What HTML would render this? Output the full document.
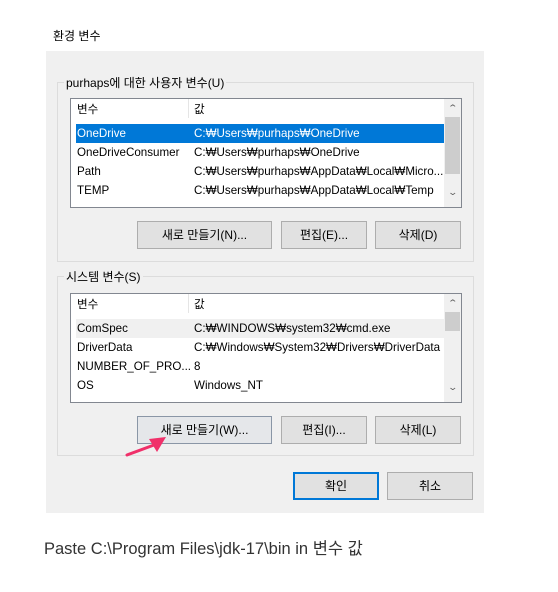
<!DOCTYPE html>
<html><head><meta charset="utf-8"><style>
body{margin:0;width:558px;height:592px;background:#fff;position:relative;font-family:"Liberation Sans","Noto Sans CJK KR",sans-serif;font-size:12px;color:#000;overflow:hidden}
.a{position:absolute}
.panel{left:46px;top:51px;width:438px;height:462px;background:#f0f0f0}
.grp{border:1px solid #dcdcdc}
.leg{background:#f0f0f0;padding:0 2px;font-size:12px}
.list{background:#fff;border:1px solid #828790;font-size:11.6px}
.hdr{height:20px;line-height:22px}
.row{height:19px;line-height:19px;white-space:nowrap}
.btn{background:#e1e1e1;border:1px solid #adadad;text-align:center;font-size:12px;box-sizing:border-box}
.sb{background:#f0f0f0}
.ar{font-size:9px;color:#606060;transform:scaleX(1.4)}
</style></head><body>
<div class="a" style="left:53px;top:27px;font-size:12px">환경 변수</div>
<div class="a panel"></div>
<div class="a grp" style="left:57px;top:82px;width:415px;height:178px"></div>
<div class="a leg" style="left:64px;top:74px">purhaps에 대한 사용자 변수(U)</div>
<div class="a list" style="left:70px;top:98px;width:390px;height:108px;overflow:hidden">
 <div class="a hdr" style="left:6px;top:0">변수</div>
 <div class="a" style="left:117px;top:0;width:1px;height:19px;background:#e5e5e5"></div>
 <div class="a hdr" style="left:123px;top:0">값</div>
 <div class="a row" style="left:5px;top:25px;width:368px;background:#0078d7;color:#fff"><span style="position:absolute;left:1px">OneDrive</span><span style="position:absolute;left:118px">C:₩Users₩purhaps₩OneDrive</span></div>
 <div class="a row" style="left:6px;top:44px">OneDriveConsumer</div><div class="a row" style="left:123px;top:44px">C:₩Users₩purhaps₩OneDrive</div>
 <div class="a row" style="left:6px;top:63px">Path</div><div class="a row" style="left:123px;top:63px">C:₩Users₩purhaps₩AppData₩Local₩Micro...</div>
 <div class="a row" style="left:6px;top:82px">TEMP</div><div class="a row" style="left:123px;top:82px">C:₩Users₩purhaps₩AppData₩Local₩Temp</div>
 <div class="a sb" style="left:373px;top:0;width:17px;height:108px"></div>
 <div class="a" style="left:374px;top:18px;width:15px;height:57px;background:#cdcdcd"></div>
 <div class="a ar" style="left:378px;top:4px">⌃</div>
 <div class="a ar" style="left:378px;top:88px">⌄</div>
</div>
<div class="a btn" style="left:137px;top:221px;width:135px;height:28px;line-height:26px">새로 만들기(N)...</div>
<div class="a btn" style="left:281px;top:221px;width:86px;height:28px;line-height:26px">편집(E)...</div>
<div class="a btn" style="left:375px;top:221px;width:86px;height:28px;line-height:26px">삭제(D)</div>

<div class="a grp" style="left:57px;top:276px;width:415px;height:178px"></div>
<div class="a leg" style="left:64px;top:268px">시스템 변수(S)</div>
<div class="a list" style="left:70px;top:293px;width:390px;height:108px;overflow:hidden">
 <div class="a hdr" style="left:6px;top:0">변수</div>
 <div class="a" style="left:117px;top:0;width:1px;height:19px;background:#e5e5e5"></div>
 <div class="a hdr" style="left:123px;top:0">값</div>
 <div class="a row" style="left:5px;top:25px;width:368px;background:#f0f0f0"><span style="position:absolute;left:1px">ComSpec</span><span style="position:absolute;left:118px">C:₩WINDOWS₩system32₩cmd.exe</span></div>
 <div class="a row" style="left:6px;top:44px">DriverData</div><div class="a row" style="left:123px;top:44px">C:₩Windows₩System32₩Drivers₩DriverData</div>
 <div class="a row" style="left:6px;top:63px">NUMBER_OF_PRO...</div><div class="a row" style="left:123px;top:63px">8</div>
 <div class="a row" style="left:6px;top:82px">OS</div><div class="a row" style="left:123px;top:82px">Windows_NT</div>
 <div class="a sb" style="left:373px;top:0;width:17px;height:108px"></div>
 <div class="a" style="left:374px;top:18px;width:15px;height:19px;background:#cdcdcd"></div>
 <div class="a ar" style="left:378px;top:4px">⌃</div>
 <div class="a ar" style="left:378px;top:88px">⌄</div>
</div>
<div class="a btn" style="left:137px;top:416px;width:135px;height:28px;line-height:26px;background:#e5e7ea;border-color:#8a96a6">새로 만들기(W)...</div>
<div class="a btn" style="left:281px;top:416px;width:86px;height:28px;line-height:26px">편집(I)...</div>
<div class="a btn" style="left:375px;top:416px;width:86px;height:28px;line-height:26px">삭제(L)</div>

<div class="a btn" style="left:293px;top:472px;width:86px;height:28px;line-height:24px;border:2px solid #0078d7">확인</div>
<div class="a btn" style="left:387px;top:472px;width:86px;height:28px;line-height:26px">취소</div>

<svg class="a" style="left:120px;top:430px" width="60" height="35" viewBox="0 0 60 35">
<line x1="7" y1="25" x2="34" y2="15" stroke="#f0306a" stroke-width="3" stroke-linecap="round"/>
<polygon points="46,7 29,9 37,22" fill="#f0306a"/>
</svg>

<div class="a" style="left:44px;top:535px;font-size:16.5px;color:#333">Paste C:\Program Files\jdk-17\bin in 변수 값</div>
</body></html>
